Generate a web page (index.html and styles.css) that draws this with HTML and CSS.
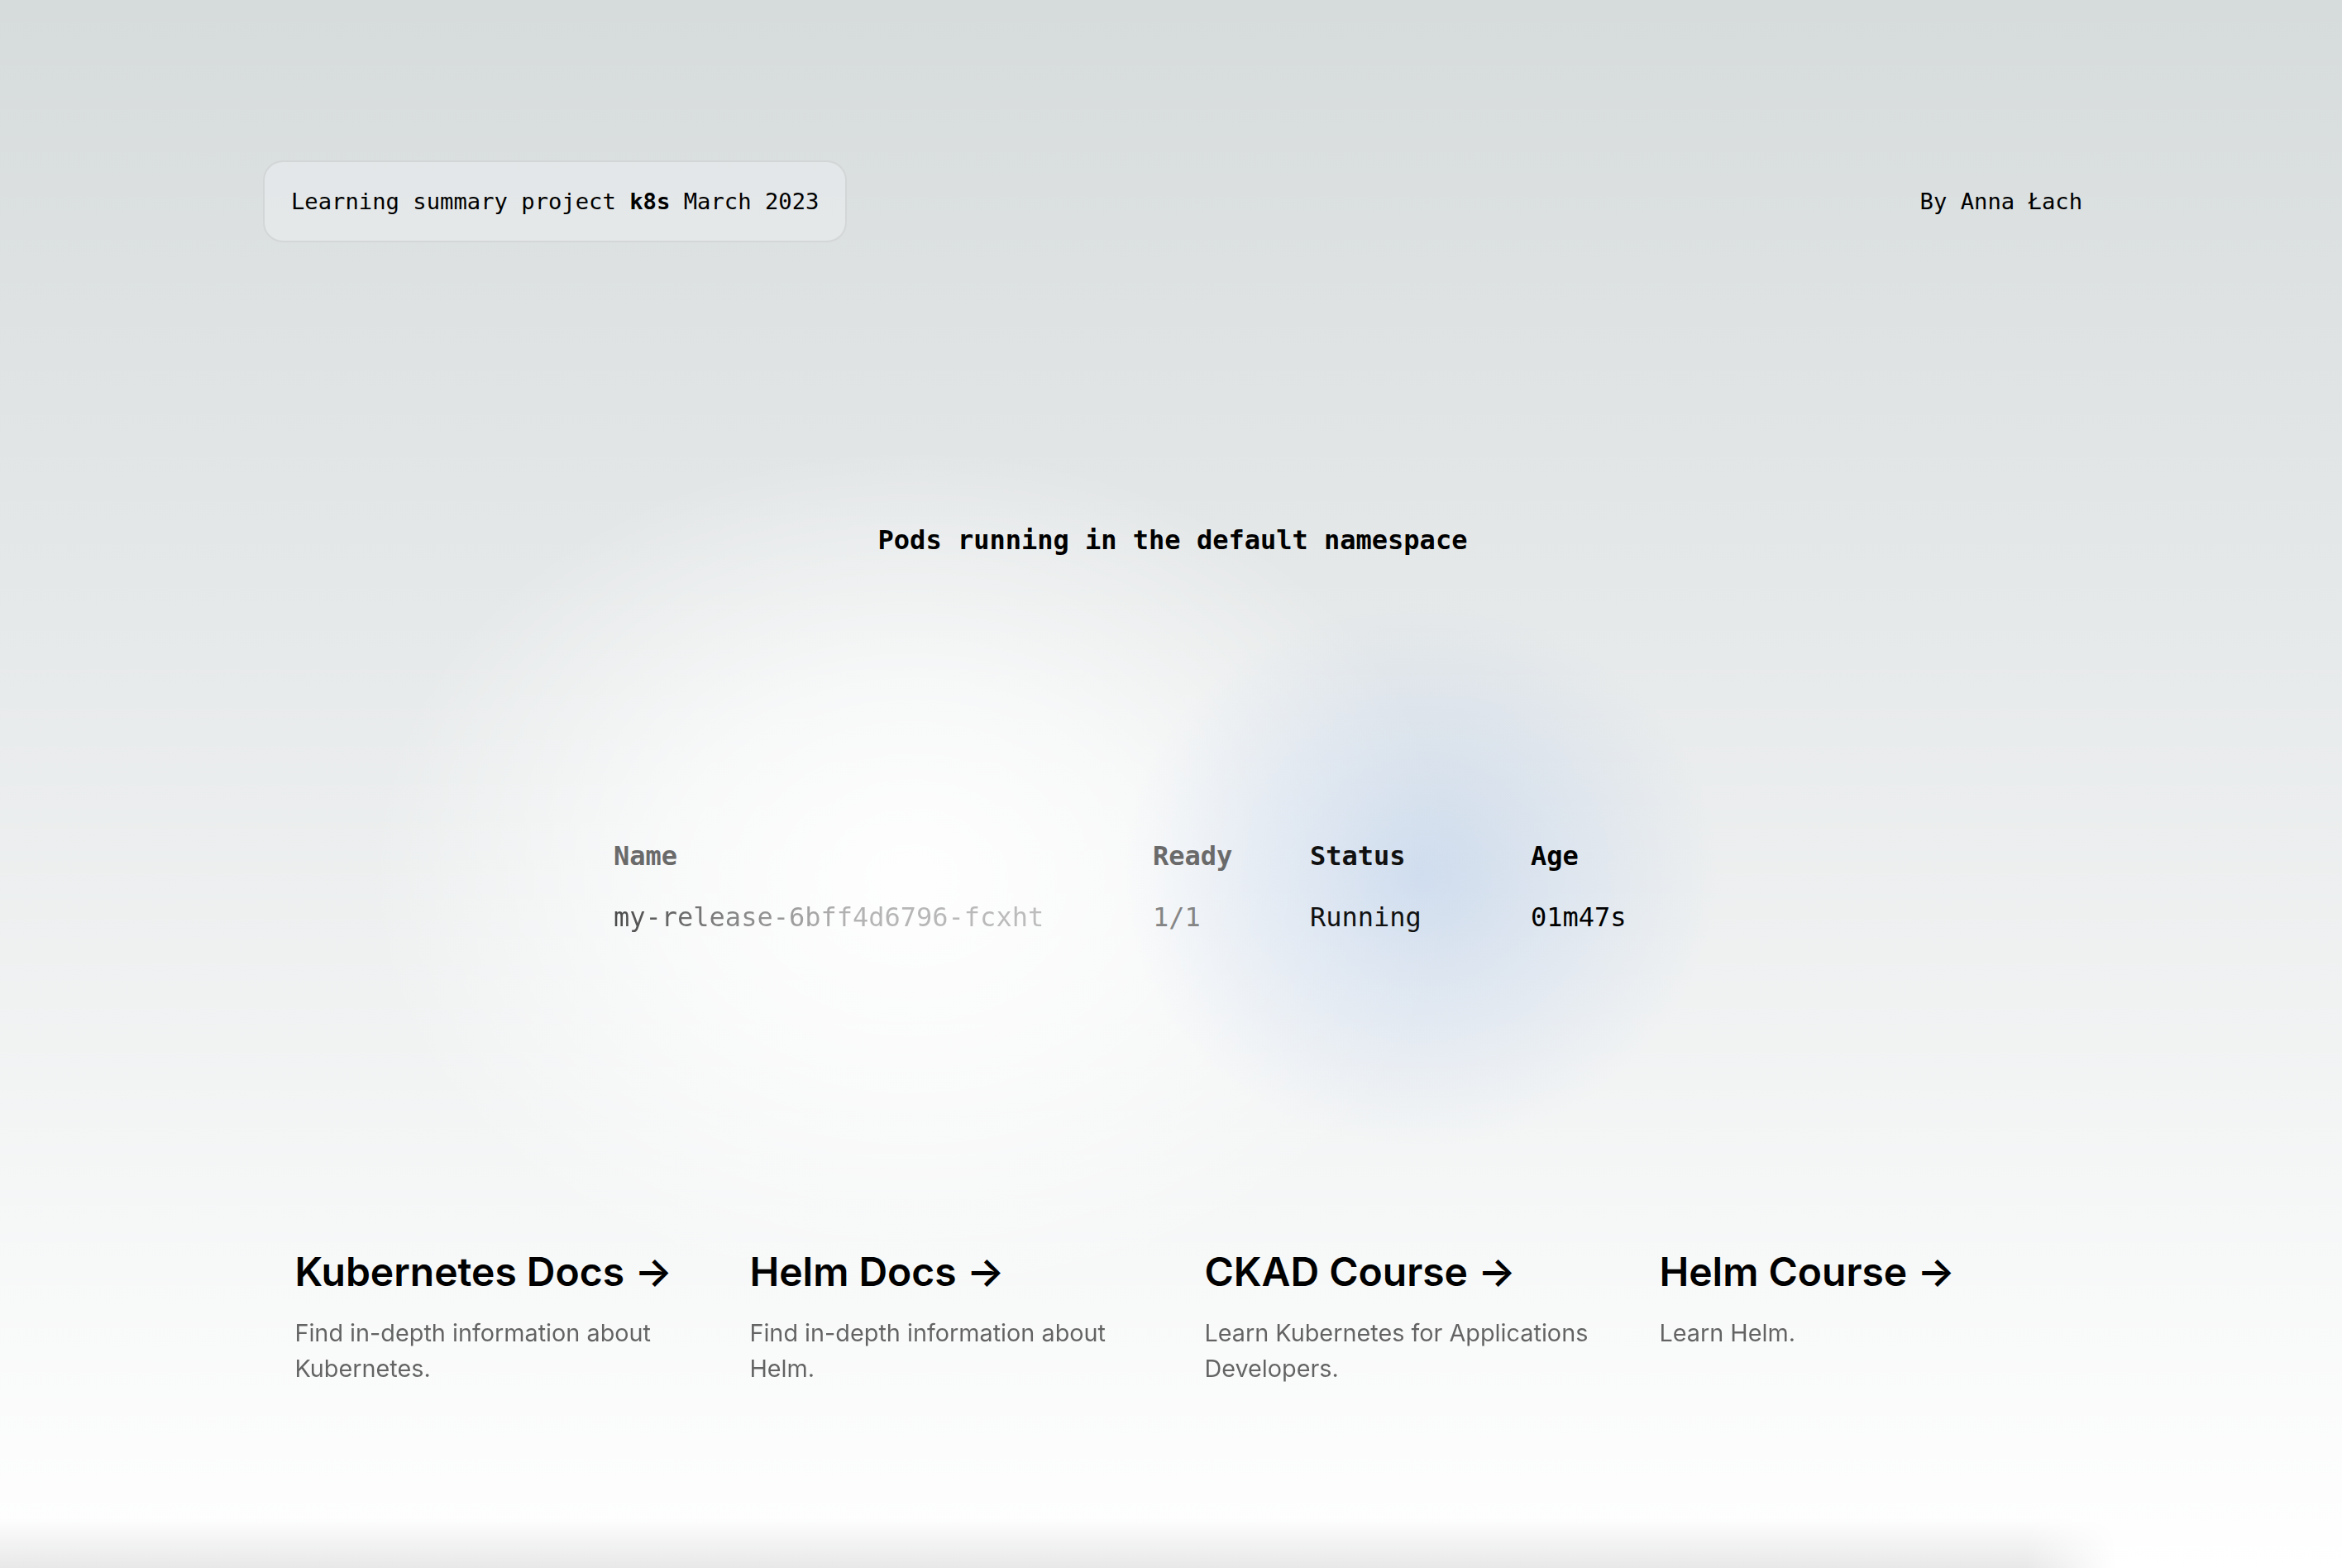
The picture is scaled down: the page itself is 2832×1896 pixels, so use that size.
FILE: index.html
```html
<!DOCTYPE html>
<html lang="en">
<head>
<meta charset="utf-8">
<title>Learning summary project k8s</title>
<link rel="stylesheet" href="styles.css">
</head>
<body>
<main class="main">
  <div class="description">
    <p class="callout">Learning summary project <code class="code">k8s</code> March 2023</p>
    <div class="author">By Anna Łach</div>
  </div>

  <h1 class="title">Pods running in the default namespace</h1>

  <section class="center">
    <div class="pods">
      <div class="cell head c-name">Name</div>
      <div class="cell head c-ready">Ready</div>
      <div class="cell head c-status">Status</div>
      <div class="cell head c-age">Age</div>
      <div class="cell c-podname">my-release-6bff4d6796-fcxht</div>
      <div class="cell c-readyval">1/1</div>
      <div class="cell c-status-val">Running</div>
      <div class="cell c-age-val">01m47s</div>
    </div>
  </section>

  <div class="grid">
    <a class="card" href="#">
      <h2>Kubernetes Docs <span>-&gt;</span></h2>
      <p>Find in-depth information about Kubernetes.</p>
    </a>
    <a class="card" href="#">
      <h2>Helm Docs <span>-&gt;</span></h2>
      <p>Find in-depth information about Helm.</p>
    </a>
    <a class="card" href="#">
      <h2>CKAD Course <span>-&gt;</span></h2>
      <p>Learn Kubernetes for Applications Developers.</p>
    </a>
    <a class="card" href="#">
      <h2>Helm Course <span>-&gt;</span></h2>
      <p>Learn Helm.</p>
    </a>
  </div>
</main>
<div class="bottom-shade"></div>
</body>
</html>
```

FILE: styles.css
```css
* {
  box-sizing: border-box;
  padding: 0;
  margin: 0;
}

html,
body {
  max-width: 100vw;
  overflow: hidden;
}

body {
  color: #000;
  font-family: Inter, "Noto Sans", sans-serif;
  background: linear-gradient(to bottom, transparent, #ffffff) #d6dbdc;
  min-height: 100vh;
}

a {
  color: inherit;
  text-decoration: none;
}

.main {
  display: flex;
  flex-direction: column;
  justify-content: space-between;
  align-items: center;
  padding: 194px 190px 188px 194px;
  min-height: 100vh;
}

.description {
  display: flex;
  justify-content: space-between;
  align-items: center;
  font-size: 27.2px;
  max-width: 2200px;
  width: 100%;
  z-index: 2;
  font-family: "DejaVu Sans Mono", monospace;
}

.callout {
  padding: 32px;
  background-color: rgba(238, 240, 241, 0.5);
  border: 2px solid rgba(172, 175, 176, 0.3);
  border-radius: 24px;
}

.code {
  font-weight: 700;
  font-family: "DejaVu Sans Mono", monospace;
}

.author {
  padding-right: 0;
}

.title {
  font-family: "DejaVu Sans Mono", monospace;
  font-size: 32px;
  font-weight: 700;
  line-height: 38px;
  margin: 10px 0 0;
}

.center {
  position: relative;
  display: flex;
  justify-content: center;
  width: 100%;
  margin-top: -5px;
}

.center::before {
  content: "";
  position: absolute;
  left: 50%;
  top: 50%;
  width: 1320px;
  height: 1040px;
  margin-left: -975px;
  margin-top: -530px;
  background: radial-gradient(closest-side, rgba(255, 255, 255, 0.97), rgba(255, 255, 255, 0.65) 45%, rgba(255, 255, 255, 0) 100%);
  z-index: -1;
}

.center::after {
  content: "";
  position: absolute;
  left: 50%;
  top: 50%;
  width: 720px;
  height: 660px;
  margin-left: -60px;
  margin-top: -345px;
  background: radial-gradient(closest-side, rgba(150, 185, 235, 0.34), rgba(160, 190, 235, 0.19) 50%, rgba(170, 195, 235, 0) 100%);
  z-index: -1;
}

.pods {
  display: grid;
  grid-template-columns: 652px 190px 267px 243px;
  grid-auto-rows: 74px;
  align-items: center;
  font-family: "DejaVu Sans Mono", monospace;
  font-size: 32px;
  line-height: 38px;
}

.head {
  font-weight: 700;
}

.c-name,
.c-ready {
  color: #6a6a6a;
}

.c-status {
  color: #111;
}

.c-age {
  color: #000;
}

.c-podname {
  justify-self: start;
  background: linear-gradient(to right, #4a4a4a 0%, #8a8a8a 30%, #b3b3b3 55%, #bdbdbd 100%);
  -webkit-background-clip: text;
  background-clip: text;
  color: transparent;
}

.c-readyval {
  color: #858585;
}

.c-status-val {
  color: #111;
}

.c-age-val {
  color: #000;
}

.grid {
  display: grid;
  grid-template-columns: repeat(4, minmax(25%, auto));
  width: 2200px;
  max-width: 100%;
}

.card {
  padding: 32px 38.4px;
  border-radius: 24px;
}

.card h2 {
  font-family: Inter, "Noto Sans", sans-serif;
  font-size: 48px;
  font-weight: 600;
  margin-bottom: 22.4px;
  line-height: 58px;
}

.card span {
  display: inline-block;
}

.card p {
  opacity: 0.6;
  font-size: 28.8px;
  line-height: 1.5;
  max-width: 30ch;
}

.bottom-shade {
  position: fixed;
  left: 0;
  bottom: 0;
  width: 100%;
  height: 60px;
  background: linear-gradient(to bottom, rgba(0, 0, 0, 0), rgba(0, 0, 0, 0.09));
  -webkit-mask-image: linear-gradient(to right, #000 2450px, transparent 2560px);
  mask-image: linear-gradient(to right, #000 2450px, transparent 2560px);
  pointer-events: none;
}
```
